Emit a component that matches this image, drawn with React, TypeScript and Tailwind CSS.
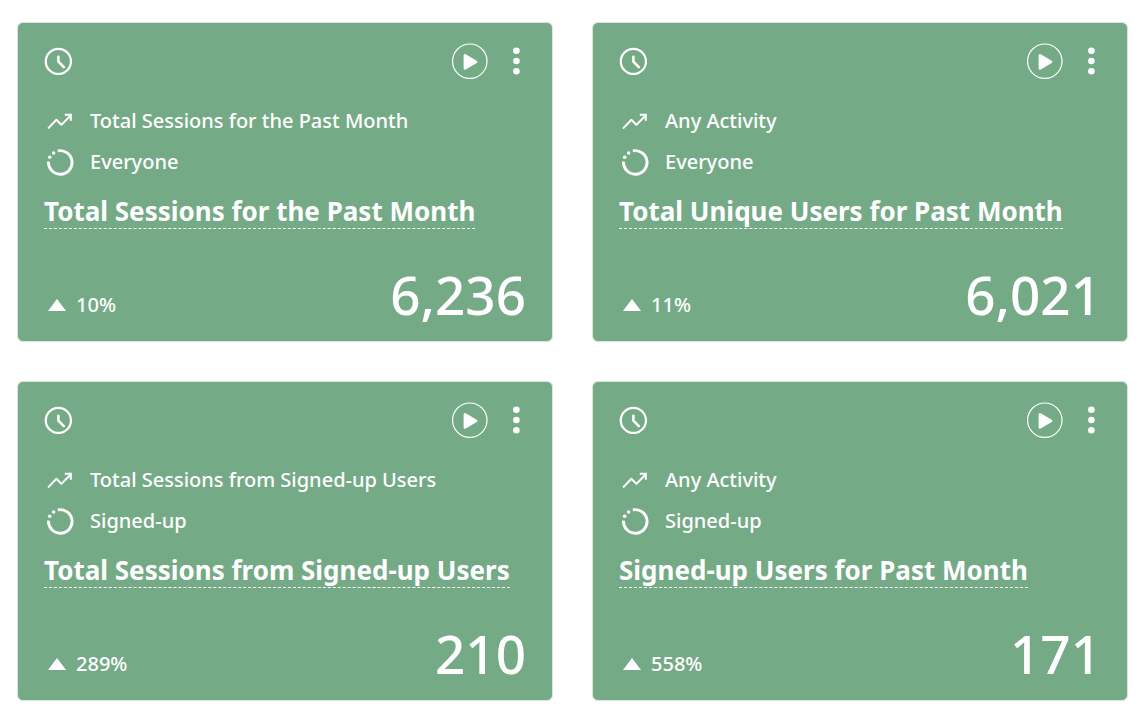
import React from 'react';

interface Metric {
  title: string;
  activity: string;
  segment: string;
  change: string;
  value: string;
}

const METRICS: Metric[] = [
  {
    title: 'Total Sessions for the Past Month',
    activity: 'Total Sessions for the Past Month',
    segment: 'Everyone',
    change: '10%',
    value: '6,236',
  },
  {
    title: 'Total Unique Users for Past Month',
    activity: 'Any Activity',
    segment: 'Everyone',
    change: '11%',
    value: '6,021',
  },
  {
    title: 'Total Sessions from Signed-up Users',
    activity: 'Total Sessions from Signed-up Users',
    segment: 'Signed-up',
    change: '289%',
    value: '210',
  },
  {
    title: 'Signed-up Users for Past Month',
    activity: 'Any Activity',
    segment: 'Signed-up',
    change: '558%',
    value: '171',
  },
];

const ClockIcon = () => (
  <svg viewBox="0 0 28 28" className="w-7 h-7" fill="none" stroke="currentColor" strokeLinecap="round" strokeLinejoin="round">
    <circle cx="14.4" cy="14.4" r="12.6" strokeWidth="2.3" />
    <path d="M14.4 9.7v5l5.4 5.4" strokeWidth="2.6" />
  </svg>
);

const PlayIcon = () => (
  <svg viewBox="0 0 36 36" className="w-9 h-9" fill="currentColor">
    <circle cx="17.8" cy="18.2" r="17.2" fill="none" stroke="currentColor" strokeWidth="1.2" />
    <path d="M13 12.4v13l11-6.5z" stroke="currentColor" strokeWidth="2.8" strokeLinejoin="round" />
  </svg>
);

const DotsIcon = () => (
  <svg viewBox="0 0 8 28" className="w-2 h-7" fill="currentColor">
    <circle cx="4.4" cy="3.8" r="3.3" />
    <circle cx="4.4" cy="14" r="3.3" />
    <circle cx="4.4" cy="24.3" r="3.3" />
  </svg>
);

const TrendIcon = () => (
  <svg viewBox="0 0 28 28" className="w-7 h-7" fill="none" stroke="currentColor" strokeWidth="2">
    <path d="M2.6 20.9l7.8-8.2 5 5.2 9.2-9.4" strokeLinecap="round" strokeLinejoin="round" />
    <path d="M18.8 7.8h6v6" />
  </svg>
);

const SegmentIcon = () => (
  <svg viewBox="0 0 28 28" className="w-7 h-7" fill="none">
    <path d="M11.8 2.9A11.8 11.8 0 1 1 2.5 13.6" stroke="currentColor" strokeWidth="2.9" />
    <circle cx="3.7" cy="9.3" r="1.8" fill="currentColor" />
    <circle cx="7.6" cy="5" r="1.8" fill="currentColor" />
  </svg>
);

const MetricCard: React.FC<{ metric: Metric }> = ({ metric }) => (
  <article className="flex flex-col h-80 rounded-md border border-[#d9e6de] bg-[#75aa87] pt-5 pb-[18px] px-[26px] text-white">
    <div className="flex items-center justify-between">
      <ClockIcon />
      <div className="flex items-center gap-6 pr-1.5">
        <button type="button" aria-label="Run" className="cursor-pointer">
          <PlayIcon />
        </button>
        <button type="button" aria-label="More options" className="cursor-pointer">
          <DotsIcon />
        </button>
      </div>
    </div>

    <ul className="mt-[21px] text-xl font-medium">
      <li className="flex h-[41px] items-center gap-4 pl-0.5">
        <TrendIcon />
        {metric.activity}
      </li>
      <li className="flex h-[41px] items-center gap-4 pl-0.5">
        <SegmentIcon />
        {metric.segment}
      </li>
    </ul>

    <h2 className="mt-[13px] self-start whitespace-nowrap border-b border-dashed border-white text-[26px] leading-[33px] font-bold">
      {metric.title}
    </h2>

    <div className="mt-auto flex items-end justify-between">
      <div className="flex items-center gap-2.5 pl-1 pb-1 text-xl font-medium">
        <svg viewBox="0 0 18 12" className="w-[18px] h-3" fill="currentColor">
          <path d="M9 0l9 12H0z" />
        </svg>
        {metric.change}
      </div>
      <div className="text-[53px] leading-[56px] font-medium">{metric.value}</div>
    </div>
  </article>
);

export default function App() {
  return (
    <main className="min-h-screen bg-white pt-[22px] pb-3 pl-[17px] pr-3.5 font-['Noto_Sans','Open_Sans',sans-serif]">
      <div className="grid grid-cols-2 gap-[39px]">
        {METRICS.map((metric) => (
          <MetricCard key={metric.title} metric={metric} />
        ))}
      </div>
    </main>
  );
}
